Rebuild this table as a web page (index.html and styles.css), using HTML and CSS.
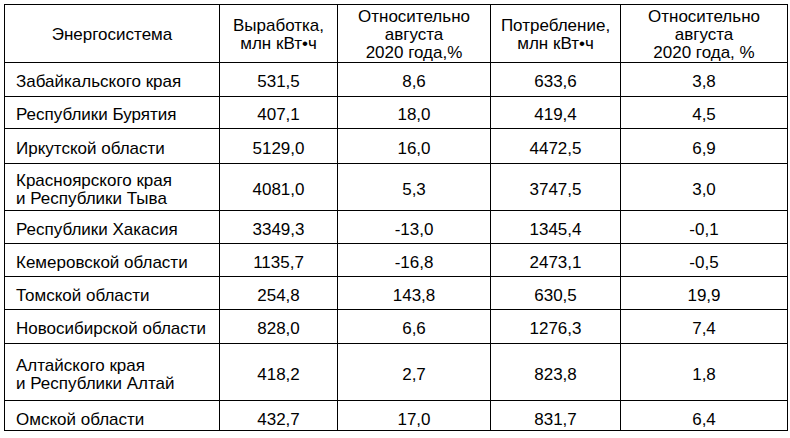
FILE: index.html
```html
<!DOCTYPE html>
<html lang="ru">
<head>
<meta charset="utf-8">
<title>Энергосистемы</title>
<link rel="stylesheet" href="styles.css">
</head>
<body>
<div class="wrap">
<table class="grid">
  <colgroup>
    <col class="c1"><col class="c2"><col class="c3"><col class="c4"><col class="c5">
  </colgroup>
  <thead>
    <tr class="h-head">
      <th>Энергосистема</th>
      <th>Выработка,<br>млн кВт•ч</th>
      <th>Относительно<br>августа<br>2020 года,%</th>
      <th>Потребление,<br>млн кВт•ч</th>
      <th>Относительно<br>августа<br>2020 года, %</th>
    </tr>
  </thead>
  <tbody>
    <tr class="h34"><td class="name">Забайкальского края</td><td>531,5</td><td>8,6</td><td>633,6</td><td>3,8</td></tr>
    <tr class="h32"><td class="name">Республики Бурятия</td><td>407,1</td><td>18,0</td><td>419,4</td><td>4,5</td></tr>
    <tr class="h35"><td class="name">Иркутской области</td><td>5129,0</td><td>16,0</td><td>4472,5</td><td>6,9</td></tr>
    <tr class="h47"><td class="name">Красноярского края<br>и Республики Тыва</td><td>4081,0</td><td>5,3</td><td>3747,5</td><td>3,0</td></tr>
    <tr class="h33"><td class="name">Республики Хакасия</td><td>3349,3</td><td>-13,0</td><td>1345,4</td><td>-0,1</td></tr>
    <tr class="h33"><td class="name">Кемеровской области</td><td>1135,7</td><td>-16,8</td><td>2473,1</td><td>-0,5</td></tr>
    <tr class="h33"><td class="name">Томской области</td><td>254,8</td><td>143,8</td><td>630,5</td><td>19,9</td></tr>
    <tr class="h34"><td class="name">Новосибирской области</td><td>828,0</td><td>6,6</td><td>1276,3</td><td>7,4</td></tr>
    <tr class="h57"><td class="name">Алтайского края<br>и Республики Алтай</td><td>418,2</td><td>2,7</td><td>823,8</td><td>1,8</td></tr>
    <tr class="h30 last"><td class="name">Омской области</td><td>432,7</td><td>17,0</td><td>831,7</td><td>6,4</td></tr>
  </tbody>
</table>
</div>
</body>
</html>
```
FILE: styles.css
```css
html, body {
  margin: 0;
  padding: 0;
  background: #ffffff;
}

.wrap {
  padding: 4px 0 0 4px;
}

.grid {
  border-collapse: collapse;
  table-layout: fixed;
  width: 783px;
  font-family: "Liberation Sans", Arial, sans-serif;
  font-size: 17px;
  line-height: 18px;
  color: #000;
}

.c1 { width: 215px; }
.c2 { width: 118px; }
.c3 { width: 153px; }
.c4 { width: 130px; }
.c5 { width: 167px; }

.grid th,
.grid td {
  border: 1px solid #000;
  padding: 0;
  text-align: center;
  vertical-align: middle;
  font-weight: normal;
}

.grid th {
  padding-top: 2px;
}

.grid td {
  padding-top: 5px;
}

.grid tr.last td {
  padding-top: 8px;
}

.grid td.name {
  text-align: left;
  padding-left: 11px;
}

.h-head th { height: 55px; }
.h30 td { height: 21px; }
.h32 td { height: 26px; }
.h33 td { height: 27px; }
.h34 td { height: 28px; }
.h35 td { height: 29px; }
.h47 td { height: 41px; }
.h57 td { height: 51px; }
```
